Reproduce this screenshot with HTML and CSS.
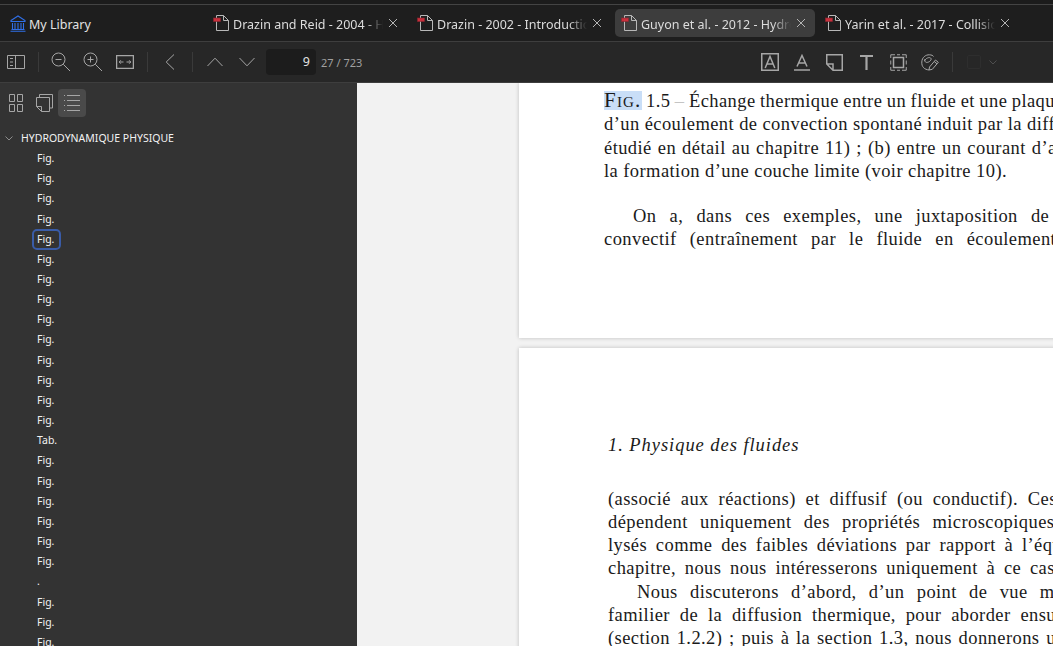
FILE: index.html
```html
<!DOCTYPE html>
<html lang="en">
<head>
    <meta charset="UTF-8">
    <title>Guyon et al. - 2012 - Hydrodynamique physique</title>
    <link rel="stylesheet" href="styles.css">
</head>
<body>
    <svg class="defs" width="0" height="0">
        <symbol id="pdf" viewBox="0 0 16 16">
            <path d="M3.500 .5H10.500L15.500 5.500V15.500H3.500Z M10.500 .5V5.500H15.500" fill="none" stroke="#b8b8b8"/>
            <rect x=".5" y="3" width="7" height="3.500" fill="#c8303c" stroke="#8e2630" stroke-width=".6"/>
        </symbol>
        <symbol id="close" viewBox="0 0 10 10">
            <path d="M1 1L9 9M9 1L1 9" stroke="#b4b4b4" fill="none"/>
        </symbol>
    </svg>

    <div class="topStrip"></div>

    <div class="tabBar">
        <div class="libraryTab">
            <svg width="16" height="18" viewBox="0 0 16 18">
                <path d="M1 6.500L8 2L15 6.500V7.500H1Z M2.500 9V15M5 9V15M8 9V15M11 9V15M13.500 9V15M1.500 15.500H14.500M.5 17.300H15.500" fill="none" stroke="#2f6fe8" stroke-width="1.100"/>
            </svg>
            <span>My Library</span>
        </div>
        <div class="tab">
            <svg class="pdfIcon"><use href="#pdf"/></svg>
            <span class="tabTitle">Drazin and Reid - 2004 - Hydrodynamic stability</span>
            <svg class="closeIcon"><use href="#close"/></svg>
        </div>
        <div class="tab">
            <svg class="pdfIcon"><use href="#pdf"/></svg>
            <span class="tabTitle">Drazin - 2002 - Introduction to hydrodynamic</span>
            <svg class="closeIcon"><use href="#close"/></svg>
        </div>
        <div class="tab tabActive">
            <svg class="pdfIcon"><use href="#pdf"/></svg>
            <span class="tabTitle">Guyon et al. - 2012 - Hydrodynamique</span>
            <svg class="closeIcon"><use href="#close"/></svg>
        </div>
        <div class="tab">
            <svg class="pdfIcon"><use href="#pdf"/></svg>
            <span class="tabTitle">Yarin et al. - 2017 - Collision phenomena</span>
            <svg class="closeIcon"><use href="#close"/></svg>
        </div>
    </div>

    <div class="toolbar">
        <div class="toolBtn">
            <svg width="18" height="14" viewBox="0 0 18 14"><path d="M.5 .5H17.500V13.500H.5Z M8.500 .5V13.500 M3 3.500H6M3 7H6M3 10.500H6" class="ico"/></svg>
        </div>
        <div class="toolSep"></div>
        <div class="toolBtn">
            <svg width="20" height="20" viewBox="0 0 20 20"><circle cx="7.500" cy="7.500" r="6.500" class="ico"/><path d="M4.500 7.500H10.500M12.300 12.300L19 19" class="ico"/></svg>
        </div>
        <div class="toolBtn">
            <svg width="20" height="20" viewBox="0 0 20 20"><circle cx="7.500" cy="7.500" r="6.500" class="ico"/><path d="M4.500 7.500H10.500M7.500 4.500V10.500M12.300 12.300L19 19" class="ico"/></svg>
        </div>
        <div class="toolBtn">
            <svg width="18" height="14" viewBox="0 0 18 14"><path d="M.5 .5H17.500V13.500H.5Z" class="ico icoBold"/><path d="M3.500 7H7.500M4.800 5.300L3.200 7L4.800 8.700M10.500 7H14.500M13.200 5.300L14.800 7L13.200 8.700" class="ico"/></svg>
        </div>
        <div class="toolSep"></div>
        <div class="toolBtn">
            <svg width="10" height="16" viewBox="0 0 10 16"><path d="M9 .5L1.200 8L9 15.500" class="ico"/></svg>
        </div>
        <div class="toolSep"></div>
        <div class="toolBtn">
            <svg width="16" height="10" viewBox="0 0 16 10"><path d="M.5 9L8 1.200L15.500 9" class="ico"/></svg>
        </div>
        <div class="toolBtn">
            <svg width="16" height="10" viewBox="0 0 16 10"><path d="M.5 1L8 8.800L15.500 1" class="ico"/></svg>
        </div>
        <div class="pageInput">9</div>
        <div class="pageCount">27 / 723</div>

        <div class="toolSpacer"></div>

        <div class="toolBtn">
            <svg width="18" height="18" viewBox="0 0 18 18"><path d="M.75 .75H17.250V17.250H.75Z" class="ico icoBold"/><path d="M4.200 15L9 3.500L13.800 15M5.800 11H12.200" class="ico icoBold"/></svg>
        </div>
        <div class="toolBtn">
            <svg width="16" height="17" viewBox="0 0 16 17"><path d="M3 12.500L8 1.500L13 12.500M4.500 9H11.500" class="ico icoBold"/><path d="M0 16H16" class="ico icoBold"/></svg>
        </div>
        <div class="toolBtn">
            <svg width="17" height="17" viewBox="0 0 17 17"><path d="M.75 .75H16.250V16.250H7L.75 10V.75Z M.75 10H7V16.250" class="ico icoBold"/></svg>
        </div>
        <div class="toolBtn">
            <svg width="13" height="15" viewBox="0 0 13 15"><path d="M0 1H13M6.500 1V15" class="ico icoThick"/></svg>
        </div>
        <div class="toolBtn">
            <svg width="17" height="17" viewBox="0 0 17 17"><path d="M3.500 3.500H13.500V13.500H3.500Z" class="ico icoBold"/><path d="M.75 4V.75H5M7 .75H10M12 .75H16.250V4M16.250 6.500V10.500M16.250 13V16.250H12M10 16.250H7M5 16.250H.75V13M.75 10.500V6.500" class="ico"/></svg>
        </div>
        <div class="toolBtn">
            <svg width="18" height="17" viewBox="0 0 18 17"><path d="M8 16C3.500 15.500 .5 13 .8 8C1 3.500 4.500 .6 8.500 .8C10.500 .9 12 1.500 12.500 2.500M3.500 7C4.500 4 9 2.500 10 4.500C11 6.500 6.500 9.500 4.500 8C3.700 7.400 3.500 6 4 5" class="ico"/><path d="M8 16L8.500 13L14.500 6L17.300 8.300L11.300 15.300Z M13.200 7.500L16 9.800" class="ico"/></svg>
        </div>
        <div class="toolSep"></div>
        <div class="colorBox"></div>
        <svg class="colorChevron" width="8" height="5" viewBox="0 0 8 5"><path d="M.5 .5L4 4L7.500 .5" fill="none" stroke="#4e4e4e"/></svg>
    </div>

    <div class="main">
        <div class="sidebar">
            <div class="sideTools">
                <div class="sideBtn">
                    <svg width="14" height="18" viewBox="0 0 14 18"><path d="M.5 .5H5.500V7.500H.5Z M8.500 .5H13.500V7.500H8.500Z M.5 10.500H5.500V17.500H.5Z M8.500 10.500H13.500V17.500H8.500Z" class="ico"/></svg>
                </div>
                <div class="sideBtn">
                    <svg width="17" height="18" viewBox="0 0 17 18"><path d="M3.500 3V.5H16.500V14H13.500M.5 3.500H13.500V17.500H5.500L.5 12.500Z M.5 12.500H5.500V17.500" class="ico"/></svg>
                </div>
                <div class="sideBtn sideBtnActive">
                    <svg width="16" height="16" viewBox="0 0 16 16"><path d="M0 .5H1M3 .5H16M0 5.500H1M3 5.500H16M0 10.500H1M3 10.500H16M3 15.500H16M0 15.500H1" class="ico"/></svg>
                </div>
            </div>
            <div class="tree">
                <div class="treeHead">
                    <svg width="8" height="5" viewBox="0 0 8 5"><path d="M.5 .5L4 4L7.500 .5" fill="none" stroke="#8c8c8c"/></svg>
                    <span>HYDRODYNAMIQUE PHYSIQUE</span>
                </div>
                <div class="treeRow"><span>Fig.</span></div>
                <div class="treeRow"><span>Fig.</span></div>
                <div class="treeRow"><span>Fig.</span></div>
                <div class="treeRow"><span>Fig.</span></div>
                <div class="treeRow treeSelected"><span>Fig.</span></div>
                <div class="treeRow"><span>Fig.</span></div>
                <div class="treeRow"><span>Fig.</span></div>
                <div class="treeRow"><span>Fig.</span></div>
                <div class="treeRow"><span>Fig.</span></div>
                <div class="treeRow"><span>Fig.</span></div>
                <div class="treeRow"><span>Fig.</span></div>
                <div class="treeRow"><span>Fig.</span></div>
                <div class="treeRow"><span>Fig.</span></div>
                <div class="treeRow"><span>Fig.</span></div>
                <div class="treeRow"><span>Tab.</span></div>
                <div class="treeRow"><span>Fig.</span></div>
                <div class="treeRow"><span>Fig.</span></div>
                <div class="treeRow"><span>Fig.</span></div>
                <div class="treeRow"><span>Fig.</span></div>
                <div class="treeRow"><span>Fig.</span></div>
                <div class="treeRow"><span>Fig.</span></div>
                <div class="treeRow"><span>.</span></div>
                <div class="treeRow"><span>Fig.</span></div>
                <div class="treeRow"><span>Fig.</span></div>
                <div class="treeRow"><span>Fig.</span></div>
            </div>
        </div>

        <div class="viewer">
            <div class="page pageOne">
                <div class="line ws0"><span class="hit">Fig.</span> 1.5 <span class="dash">–</span> Échange thermique entre un fluide et une plaque</div>
                <div class="line">d’un écoulement de convection spontané induit par la diffusion</div>
                <div class="line ws1">étudié en détail au chapitre 11) ; (b) entre un courant d’air</div>
                <div class="line">la formation d’une couche limite (voir chapitre 10).</div>
                <div class="line paraGap indent ws8">On a, dans ces exemples, une juxtaposition de</div>
                <div class="line ws8">convectif (entraînement par le fluide en écoulement</div>
            </div>
            <div class="page pageTwo">
                <div class="running">1. Physique des fluides</div>
                <div class="line ws5">(associé aux réactions) et diffusif (ou conductif). Ces</div>
                <div class="line ws7">dépendent uniquement des propriétés microscopiques</div>
                <div class="line ws4">lysés comme des faibles déviations par rapport à l’équilibre</div>
                <div class="line ws4">chapitre, nous nous intéresserons uniquement à ce cas</div>
                <div class="line indent ws7">Nous discuterons d’abord, d’un point de vue macro</div>
                <div class="line ws5">familier de la diffusion thermique, pour aborder ensuite</div>
                <div class="line ws2">(section 1.2.2) ; puis à la section 1.3, nous donnerons un</div>
            </div>
        </div>
    </div>
</body>
</html>
```

FILE: styles.css
```css
*{
    box-sizing: border-box;
}

html, body{
    margin: 0;
    height: 100%;
    overflow: hidden;
}

body{
    display: flex;
    flex-direction: column;
    background-color: #272727;
    font-family: "Noto Sans", sans-serif;
    color: #e2e2e2;
}

.defs{
    position: absolute;
}

.ico{
    fill: none;
    stroke: #a6a6a6;
    stroke-width: 1;
}

.icoBold{
    stroke-width: 1.5;
}

.icoThick{
    stroke-width: 2.2;
}

.topStrip{
    height: 5px;
    flex: none;
    background-color: #1c1c1c;
    border-bottom: 1px solid #444444;
}

/* tabs */
.tabBar{
    height: 37px;
    flex: none;
    display: flex;
    gap: 4px;
    padding-top: 4px;
    background-color: #1e1e1e;
    border-bottom: 1px solid #3e3e3e;
}

.libraryTab{
    width: 203px;
    height: 28px;
    display: flex;
    align-items: center;
    gap: 3px;
    padding-left: 10px;
    font-size: 12.5px;
}

.libraryTab span{
    padding-top: 2px;
}

.tab{
    width: 200px;
    height: 28px;
    display: flex;
    align-items: center;
    padding-left: 6px;
    border-radius: 5px;
    font-size: 12.5px;
    color: #dcdcdc;
}

.tabActive{
    background-color: #3d3d3d;
}

.pdfIcon{
    width: 16px;
    height: 16px;
    flex: none;
    margin-right: 4px;
}

.tabTitle{
    width: 150px;
    padding-top: 2px;
    overflow: hidden;
    white-space: nowrap;
    -webkit-mask-image: linear-gradient(to right, #000 88%, transparent 100%);
    mask-image: linear-gradient(to right, #000 88%, transparent 100%);
}

.closeIcon{
    width: 10px;
    height: 10px;
    flex: none;
    margin-left: 5px;
    margin-top: -1px;
}

/* toolbar */
.toolbar{
    height: 41px;
    flex: none;
    display: flex;
    align-items: center;
    background-color: #272727;
    border-bottom: 1px solid #3e3e3e;
}

.toolBtn{
    width: 32px;
    height: 26px;
    flex: none;
    display: flex;
    align-items: center;
    justify-content: center;
}

.toolSep{
    width: 1px;
    height: 20px;
    flex: none;
    margin: 0 6px;
    background-color: #3a3a3a;
}

.pageInput{
    width: 50px;
    height: 26px;
    flex: none;
    margin-left: 3px;
    padding-right: 6px;
    border-radius: 4px;
    background-color: #1c1c1c;
    font-size: 12.5px;
    line-height: 26px;
    text-align: right;
}

.pageCount{
    margin-left: 5px;
    font-size: 11px;
    color: #a0a0a0;
}

.toolSpacer{
    flex: 1;
}

.colorBox{
    width: 14px;
    height: 14px;
    flex: none;
    margin-left: 8px;
    border: 1px solid #2e2e2e;
    border-radius: 2px;
}

.colorChevron{
    flex: none;
    margin-left: 8px;
    margin-right: 56px;
}

/* main area */
.main{
    flex: 1;
    min-height: 0;
    display: flex;
}

.sidebar{
    width: 357px;
    flex: none;
    overflow: hidden;
    background-color: #333333;
}

.sideTools{
    display: flex;
    align-items: center;
    padding: 6px 0 0 2px;
}

.sideBtn{
    width: 28px;
    height: 28px;
    display: flex;
    align-items: center;
    justify-content: center;
    border-radius: 4px;
}

.sideBtnActive{
    background-color: #4a4a4a;
}

.tree{
    padding-top: 11px;
    font-size: 10.5px;
    color: #f2f2f2;
}

.treeHead{
    height: 20.5px;
    display: flex;
    align-items: center;
    gap: 8px;
    padding-left: 5px;
}

.treeRow{
    height: 20.17px;
    display: flex;
    align-items: center;
    padding-left: 32px;
}

.treeRow span{
    height: 21px;
    line-height: 19px;
    padding: 0 5px;
    border: 2px solid transparent;
    border-width: 1px 0;
    flex: none;
}

.treeSelected span{
    padding: 0 5px 0 3px;
    border: 2px solid #3a5ca8;
    border-radius: 5px;
    line-height: 16px;
}

/* document */
.viewer{
    flex: 1;
    min-width: 0;
    overflow: hidden;
    padding-left: 162px;
    background-color: #f2f2f2;
    font-family: "Liberation Serif", serif;
    color: #1a1a1a;
}

.page{
    width: 700px;
    background-color: #ffffff;
    box-shadow: 0 0 4px rgba(0, 0, 0, 0.22);
    white-space: nowrap;
    font-size: 18.5px;
    letter-spacing: 0.42px;
}

.pageOne{
    height: 255px;
    padding: 7px 0 0 85px;
}

.pageTwo{
    height: 400px;
    margin-top: 10px;
    padding: 86px 0 0 89px;
}

.line{
    height: 23.25px;
    line-height: 23.25px;
}

.running{
    height: 42.5px;
    line-height: 22px;
    margin-bottom: 11px;
    font-style: italic;
    letter-spacing: 0.95px;
}

.paraGap{
    margin-top: 21.5px;
}

.indent{
    padding-left: 29px;
}

/* lines are justified in the pdf, so each one has its own word gap */
.ws0{
    word-spacing: -0.6px;
}

.ws1{
    word-spacing: 1px;
}

.ws2{
    word-spacing: 1.7px;
}

.ws4{
    word-spacing: 3.7px;
}

.ws5{
    word-spacing: 4.8px;
}

.ws7{
    word-spacing: 7.2px;
}

.ws8{
    word-spacing: 8.1px;
}

.hit{
    background-color: #c9def7;
    font-variant: small-caps;
    font-size: 21px;
    line-height: 19px;
    display: inline-block;
    letter-spacing: 1.2px;
}

.dash{
    color: #c4c4c4;
}
```
